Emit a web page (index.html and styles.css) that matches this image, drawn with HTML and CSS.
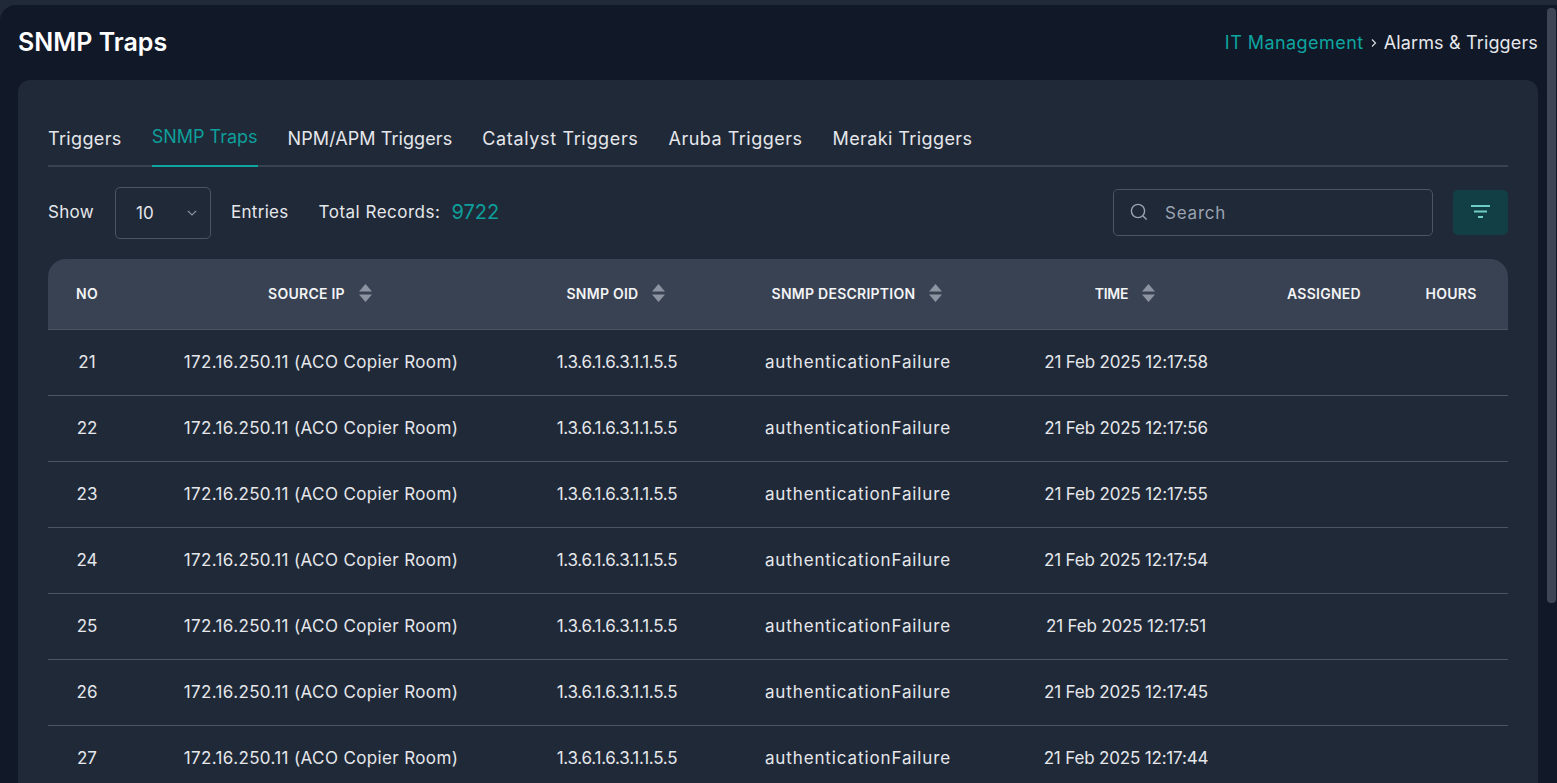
FILE: index.html
```html
<!DOCTYPE html>
<html lang="en">
<head>
<meta charset="utf-8">
<title>SNMP Traps</title>
<link rel="stylesheet" href="styles.css">
</head>
<body>
<div class="topstrip"></div>
<div class="shell">
  <main class="main">
    <header class="pagehead">
      <h1 class="title">SNMP Traps</h1>
      <nav class="crumbs"><a class="crumb-link">IT Management</a>
        <svg class="crumb-sep" width="8" height="10" viewBox="0 0 8 10"><path d="M2 1.500 5.500 5 2 8.500" fill="none" stroke="#d5d8dd" stroke-width="1.2"/></svg>
        <span class="crumb-current">Alarms &amp; Triggers</span></nav>
    </header>
    <section class="card">
      <div class="tabs">
        <a class="tab t-trig">Triggers</a>
        <a class="tab active">SNMP Traps</a>
        <a class="tab t-npm">NPM/APM Triggers</a>
        <a class="tab t-cat">Catalyst Triggers</a>
        <a class="tab t-aru">Aruba Triggers</a>
        <a class="tab t-mer">Meraki Triggers</a>
      </div>
      <div class="toolbar">
        <span class="label">Show</span>
        <div class="select"><span>10</span>
          <svg width="10" height="6" viewBox="0 0 10 6"><path d="M.8.8 5 5 9.200.8" fill="none" stroke="#8b93a1" stroke-width="1.2"/></svg>
        </div>
        <span class="label">Entries</span>
        <span class="label total">Total Records:</span>
        <span class="count">9722</span>
        <div class="search">
          <svg width="18" height="18" viewBox="0 0 18 18"><circle cx="8" cy="8" r="6.600" fill="none" stroke="#9aa3b0" stroke-width="1.4"/><path d="m13 13 3.600 3.600" stroke="#9aa3b0" stroke-width="1.4" fill="none"/></svg>
          <span class="placeholder">Search</span>
        </div>
        <button class="filter" type="button">
          <svg width="20" height="14" viewBox="0 0 20 14"><path d="M0 1h19M3 6.500h13M7 12h5" stroke="#6fcdc8" stroke-width="2" fill="none"/></svg>
        </button>
      </div>
      <table class="grid">
        <colgroup><col class="c1"><col class="c2"><col class="c3"><col class="c4"><col class="c5"><col class="c6"><col class="c7"></colgroup>
        <thead>
          <tr>
            <th>NO</th>
            <th><span class="th-in">SOURCE IP<svg class="sort" width="13" height="18" viewBox="0 0 13 18"><path d="M6.500 0 13 7.500H0zM6.500 18 0 10.500h13z"/></svg></span></th>
            <th><span class="th-in">SNMP OID<svg class="sort" width="13" height="18" viewBox="0 0 13 18"><path d="M6.500 0 13 7.500H0zM6.500 18 0 10.500h13z"/></svg></span></th>
            <th><span class="th-in">SNMP DESCRIPTION<svg class="sort" width="13" height="18" viewBox="0 0 13 18"><path d="M6.500 0 13 7.500H0zM6.500 18 0 10.500h13z"/></svg></span></th>
            <th class="th-time"><span class="th-in">TIME<svg class="sort" width="13" height="18" viewBox="0 0 13 18"><path d="M6.500 0 13 7.500H0zM6.500 18 0 10.500h13z"/></svg></span></th>
            <th>ASSIGNED</th>
            <th>HOURS</th>
          </tr>
        </thead>
        <tbody>
          <tr><td>21</td><td>172.16.250.11 (ACO Copier Room)</td><td>1.3.6.1.6.3.1.1.5.5</td><td>authenticationFailure</td><td>21 Feb 2025 12:17:58</td><td></td><td></td></tr>
          <tr><td>22</td><td>172.16.250.11 (ACO Copier Room)</td><td>1.3.6.1.6.3.1.1.5.5</td><td>authenticationFailure</td><td>21 Feb 2025 12:17:56</td><td></td><td></td></tr>
          <tr><td>23</td><td>172.16.250.11 (ACO Copier Room)</td><td>1.3.6.1.6.3.1.1.5.5</td><td>authenticationFailure</td><td>21 Feb 2025 12:17:55</td><td></td><td></td></tr>
          <tr><td>24</td><td>172.16.250.11 (ACO Copier Room)</td><td>1.3.6.1.6.3.1.1.5.5</td><td>authenticationFailure</td><td>21 Feb 2025 12:17:54</td><td></td><td></td></tr>
          <tr><td>25</td><td>172.16.250.11 (ACO Copier Room)</td><td>1.3.6.1.6.3.1.1.5.5</td><td>authenticationFailure</td><td>21 Feb 2025 12:17:51</td><td></td><td></td></tr>
          <tr><td>26</td><td>172.16.250.11 (ACO Copier Room)</td><td>1.3.6.1.6.3.1.1.5.5</td><td>authenticationFailure</td><td>21 Feb 2025 12:17:45</td><td></td><td></td></tr>
          <tr><td>27</td><td>172.16.250.11 (ACO Copier Room)</td><td>1.3.6.1.6.3.1.1.5.5</td><td>authenticationFailure</td><td>21 Feb 2025 12:17:44</td><td></td><td></td></tr>
        </tbody>
      </table>
    </section>
  </main>
  <div class="scrolltrack"><div class="scrollthumb"></div></div>
</div>
</body>
</html>
```
FILE: styles.css
```css
* { box-sizing: border-box; }
html, body { margin: 0; height: 783px; overflow: hidden; }
body { background: #202938; font-family: Inter, "Liberation Sans", sans-serif; color: #e5e7eb; }
.topstrip { height: 5px; }
.shell { display: flex; height: 778px; background: #111827; border-top-left-radius: 16px; overflow: hidden; }
.main { flex: 1; min-width: 0; padding: 0 9px 0 18px; }
.pagehead { height: 75px; display: flex; align-items: center; justify-content: space-between; }
.title { margin: 0 0 2px; font-size: 25px; font-weight: 600; color: #fff; }
.crumbs { display: flex; align-items: center; gap: 6px; font-size: 18px; line-height: 22px; }
.crumb-link { color: #0ea5a0; letter-spacing: .45px; }
.crumb-current { color: #e5e7eb; letter-spacing: .15px; }
.card { background: #202938; border-radius: 12px 12px 0 0; padding: 30px 30px 0; height: 703px; overflow: hidden; }
.tabs { display: flex; gap: 30px; height: 57px; border-bottom: 2px solid #3a4252; }
.tab { height: 57px; padding-top: 18px; font-size: 18px; line-height: 22px; color: #e5e7eb; }
.t-trig { letter-spacing: .35px; }
.t-npm { letter-spacing: .07px; }
.t-cat { letter-spacing: .65px; }
.t-aru { letter-spacing: .5px; }
.t-mer { letter-spacing: .4px; }
.tab.active { padding-top: 16px; color: #0d9f9b; border-bottom: 2px solid #0ea5a0; }
.toolbar { display: flex; align-items: center; height: 52px; margin-top: 20px; padding-bottom: 2px; font-size: 17px; }
.label { color: #e5e7eb; letter-spacing: .3px; }
.select { display: flex; align-items: center; justify-content: space-between; width: 96px; height: 52px; margin: 0 20px -2px 21px; padding: 0 13px 0 20px; border: 1px solid #4b5563; border-radius: 5px; }
.total { margin-left: 30px; letter-spacing: .5px; }
.count { margin-left: 11px; font-size: 20px; color: #0d9f9b; }
.search { display: flex; align-items: center; gap: 17px; width: 320px; height: 47px; margin-left: auto; padding-left: 16px; border: 1px solid #4b5563; border-radius: 5px; }
.placeholder { padding-top: 2px; color: #9aa3b0; letter-spacing: .8px; }
.filter { display: flex; align-items: center; justify-content: center; width: 55px; height: 45px; margin-left: 20px; padding: 0; border: 0; border-radius: 5px; background: #123f45; }
.grid { width: 1460px; margin-top: 20px; border-collapse: separate; border-spacing: 0; table-layout: fixed; }
.c1 { width: 78px; } .c2 { width: 390px; } .c3 { width: 202px; } .c4 { width: 280px; } .c5 { width: 256px; } .c6 { width: 140px; } .c7 { width: 114px; }
th { height: 71px; padding: 0 0 2px; background: #394253; border-bottom: 1px solid #4b5563; font-size: 14px; font-weight: 600; letter-spacing: .25px; color: #f3f4f6; text-align: center; }
th:first-child { border-top-left-radius: 18px; }
th:last-child { border-top-right-radius: 18px; }
.th-time { letter-spacing: -.3px; }
.th-in { display: inline-flex; align-items: center; gap: 14px; margin-right: 2px; }
.sort { fill: #8c93a1; }
td { height: 66px; padding: 0 0 2px; border-bottom: 1px solid #4b5563; font-size: 17px; text-align: center; color: #e5e7eb; }
td:nth-child(2) { letter-spacing: .37px; }
td:nth-child(3) { letter-spacing: -.25px; }
td:nth-child(4) { letter-spacing: .88px; }
td:nth-child(5) { letter-spacing: -.17px; }
.scrolltrack { width: 10px; padding-top: 3px; }
.scrollthumb { width: 9px; height: 595px; background: #3e4554; border-radius: 4px; }
```
